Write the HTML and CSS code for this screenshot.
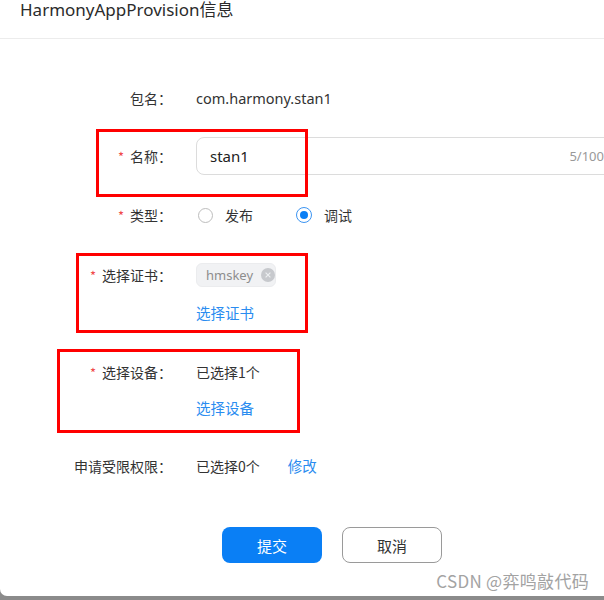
FILE: index.html
```html
<!DOCTYPE html>
<html lang="zh">
<head>
<meta charset="utf-8">
<link rel="stylesheet" href="styles.css">
</head>
<body>
<div class="modal">
  <div class="header"><div class="title">HarmonyAppProvision信息</div></div>
  <div class="form">
    <div class="item item-pkg">
      <div class="label">包名：</div>
      <div class="content"><div class="line">com.harmony.stan1</div></div>
    </div>
    <div class="item item-name">
      <div class="label label-input"><span class="star">*</span>名称：</div>
      <div class="content">
        <div class="input"><span class="input-val">stan1</span><span class="count">5/100</span></div>
      </div>
    </div>
    <div class="item item-type">
      <div class="label"><span class="star">*</span>类型：</div>
      <div class="content">
        <div class="line radios">
          <span class="radio"></span><span class="radio-text">发布</span>
          <span class="radio radio-on"></span><span class="radio-text">调试</span>
        </div>
      </div>
    </div>
    <div class="item item-cert">
      <div class="label"><span class="star">*</span>选择证书：</div>
      <div class="content">
        <div class="line"><span class="tag">hmskey<span class="tag-close"><svg width="14" height="14" viewBox="0 0 14 14"><circle cx="7" cy="7" r="7" fill="#c7c9cd"/><path d="M4.6 4.6 L9.4 9.4 M9.4 4.6 L4.6 9.4" stroke="#eef0f2" stroke-width="1.1"/></svg></span></span></div>
        <div class="link link-cert">选择证书</div>
      </div>
    </div>
    <div class="item item-dev">
      <div class="label"><span class="star">*</span>选择设备：</div>
      <div class="content">
        <div class="line">已选择1个</div>
        <div class="link link-dev">选择设备</div>
      </div>
    </div>
    <div class="item item-perm">
      <div class="label">申请受限权限：</div>
      <div class="content"><div class="line">已选择0个<span class="link link-inline">修改</span></div></div>
    </div>
    <div class="actions">
      <button class="btn btn-primary">提交</button>
      <button class="btn btn-default">取消</button>
    </div>
  </div>
  <div class="mark mark-1"></div>
  <div class="mark mark-2"></div>
  <div class="mark mark-3"></div>
  <div class="watermark">CSDN @弈鸣敲代码</div>
</div>
</body>
</html>
```
FILE: styles.css
```css
* { box-sizing: border-box; }
html, body { margin: 0; padding: 0; }
body {
  background: #8b8b8b;
  width: 604px;
  height: 600px;
  overflow: hidden;
  font-family: "Noto Sans CJK SC", "Noto Sans", sans-serif;
  color: #333;
}
.modal {
  position: relative;
  width: 604px;
  height: 596px;
  background: #fff;
  border-bottom-left-radius: 7px;
  overflow: hidden;
}
.header {
  height: 39px;
  border-bottom: 1px solid #ececec;
}
.title {
  padding-left: 20px;
  padding-top: 1px;
  font-size: 17px;
  line-height: 17px;
  color: #2b2b2b;
  font-family: "Noto Sans", "Noto Sans CJK SC", sans-serif;
}
.form { display: flex; flex-direction: column; }
.item { display: flex; align-items: flex-start; }
.label {
  flex: 0 0 172px;
  width: 172px;
  text-align: right;
  font-size: 14px;
  line-height: 36px;
  color: #333;
  white-space: nowrap;
}
.label-input { line-height: 38px; }
.star { color: #f04848; margin-right: 6px; font-size: 13px; }
.content { margin-left: 24px; font-size: 14px; flex: 0 0 auto; }
.line { line-height: 36px; height: 36px; display: flex; align-items: center; white-space: nowrap; }
.item-pkg { margin-top: 41px; }
.item-pkg .line { font-family: "Noto Sans", "Noto Sans CJK SC", sans-serif; font-size: 14.5px; }
.item-name { margin-top: 21px; }
.item-type { margin-top: 21px; }
.item-cert { margin-top: 23px; }
.item-dev { margin-top: 30px; }
.item-perm { margin-top: 29px; }

.input {
  width: 424px;
  height: 38px;
  border: 1px solid #dcdcdc;
  border-radius: 8px;
  display: flex;
  align-items: center;
  justify-content: space-between;
  padding: 0 13px;
}
.input-val { font-family: "Noto Sans", sans-serif; font-size: 15px; color: #222; }
.count { font-family: "Noto Sans", sans-serif; font-size: 13px; color: #999; margin-right: 2px; }

.radios { padding-left: 2px; }
.radio {
  width: 15px; height: 15px;
  border: 1px solid #bdbdbd;
  border-radius: 50%;
  display: inline-block;
  position: relative;
}
.radio-on { border-color: #3d95f2; width: 16px; height: 16px; }
.radio-on::after {
  content: "";
  position: absolute;
  left: 3px; top: 3px;
  width: 8px; height: 8px;
  border-radius: 50%;
  background: #0a7ff5;
}
.radio-text { margin-left: 12px; margin-right: 43px; }

.tag {
  display: inline-flex;
  align-items: center;
  height: 24px;
  width: 80px;
  padding-left: 9px;
  background: #f1f2f4;
  border: 1px solid #ebecee;
  border-radius: 6px;
  font-family: "Noto Sans", sans-serif;
  font-size: 13px;
  color: #8d8d8d;
}
.tag-close { display: inline-flex; margin-left: 8px; }

.link { color: #2a8cf0; font-size: 14.5px; line-height: 22px; }
.link-cert { margin-top: 9px; }
.link-dev { margin-top: 7px; }
.link-inline { margin-left: 28px; line-height: 36px; }

.actions { margin-top: 43px; padding-left: 222px; display: flex; gap: 20px; }
.btn {
  width: 100px;
  height: 36px;
  border-radius: 8px;
  font-family: "Noto Sans CJK SC", sans-serif;
  font-size: 15px;
  cursor: pointer;
}
.btn-primary { background: #0a7ff5; color: #fff; border: none; }
.btn-default { background: #fff; color: #333; border: 1px solid #9a9a9a; }

.mark { position: absolute; border: 3px solid #ff0000; }
.mark-1 { left: 96px; top: 129px; width: 212px; height: 68px; }
.mark-2 { left: 76px; top: 253px; width: 232px; height: 80px; }
.mark-3 { left: 57px; top: 349px; width: 243px; height: 84px; }

.watermark {
  position: absolute;
  right: 15px;
  top: 570px;
  font-size: 17px;
  line-height: 22px;
  letter-spacing: 0.3px;
  color: #a3a3a3;
  font-family: "Noto Sans CJK SC", sans-serif;
}
```
